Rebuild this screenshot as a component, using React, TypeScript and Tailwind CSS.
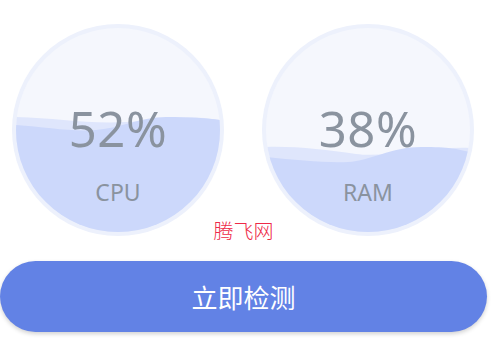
import React from "react";

type Gauge = {
  value: number;
  label: string;
  back: string;
  front: string;
};

const gauges: Gauge[] = [
  {
    value: 52,
    label: "CPU",
    back: "M0 89 C 40 90, 70 96, 110 94 S 170 86, 204 92 L204 204 L0 204 Z",
    front: "M0 97 C 30 99, 55 104, 80 102 S 125 89, 150 89 S 190 90, 204 92 L204 204 L0 204 Z",
  },
  {
    value: 38,
    label: "RAM",
    back: "M0 119 C 30 118, 60 122, 90 126 S 170 118, 204 120 L204 204 L0 204 Z",
    front: "M0 129 C 30 132, 60 135, 82 134 S 125 119, 155 119 S 190 121, 204 124 L204 204 L0 204 Z",
  },
];

function WaterBall({ g }: { g: Gauge }) {
  return (
    <div className="h-[212px] w-[212px] shrink-0 rounded-full bg-[#edf1fc] p-[4px]">
      <div className="relative h-full w-full overflow-hidden rounded-full bg-[#f5f7fd]">
        <svg viewBox="0 0 204 204" className="absolute inset-0 h-full w-full">
          <path d={g.back} fill="#dfe6fc" />
          <path d={g.front} fill="#ccd8fb" />
        </svg>
        <div className="relative flex h-full flex-col items-center font-normal text-[#8a939f] [font-family:'Noto_Sans',sans-serif]">
          <div className="mt-[72px] text-[49px] leading-[56px] tracking-[0.5px]">{g.value}%</div>
          <div className="mt-[22px] text-[23px] leading-[28px]">{g.label}</div>
        </div>
      </div>
    </div>
  );
}

export default function App() {
  return (
    <div className="h-[339px] w-[498px] bg-white pt-[24px] [font-family:'Noto_Sans','Noto_Sans_CJK_SC',sans-serif]">
      <div className="w-[487px]">
        <div className="flex gap-[38px] pl-[12px]">
          {gauges.map((g) => (
            <WaterBall key={g.label} g={g} />
          ))}
        </div>
        <div className="-mt-[15px] text-center text-[20px] leading-[20px] font-light text-[#ee2a48] [font-family:'Noto_Sans_CJK_SC',sans-serif]">
          腾飞网
        </div>
        <button className="mt-[20px] flex h-[71px] w-[487px] items-center justify-center rounded-full bg-[#6282e5] text-[26px] text-white shadow-[0_2px_4px_rgba(0,0,0,0.18)] [font-family:'Noto_Sans_CJK_SC',sans-serif]">
          立即检测
        </button>
      </div>
    </div>
  );
}
